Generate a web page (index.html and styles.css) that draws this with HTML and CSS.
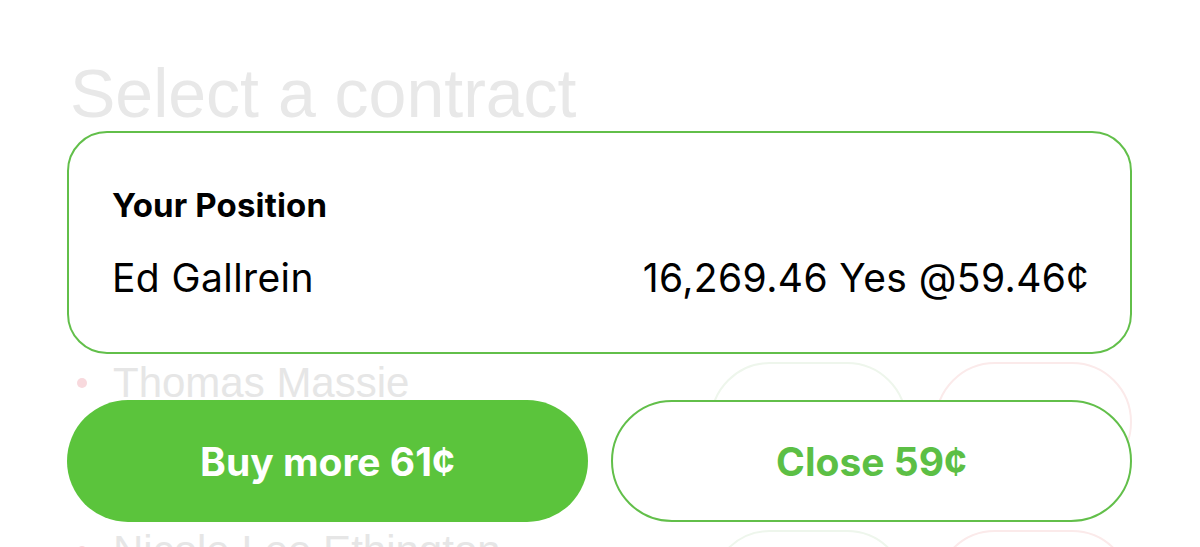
FILE: index.html
```html
<!DOCTYPE html>
<html lang="en">
<head>
    <meta charset="UTF-8">
    <meta name="viewport" content="width=device-width, initial-scale=1.0">
    <title>Select a contract</title>
    <link rel="stylesheet" href="styles.css">
</head>
<body>
    <div class="screen">
        <div class="contracts">
            <h1 class="title">Select a contract</h1>
            <div class="contract-list">
                <div class="contract-row">
                    <div class="contract-name"><span class="dot"></span>Thomas Massie</div>
                    <div class="pill yes"></div>
                    <div class="pill no"></div>
                </div>
                <div class="contract-row">
                    <div class="contract-name"><span class="dot"></span>Nicole Lee Ethington</div>
                    <div class="pill yes"></div>
                    <div class="pill no"></div>
                </div>
            </div>
        </div>

        <div class="position-panel">
            <div class="position-card">
                <div class="position-title">Your Position</div>
                <div class="position-row">
                    <span>Ed Gallrein</span>
                    <span>16,269.46 Yes @59.46¢</span>
                </div>
            </div>
            <div class="panel-buttons">
                <button class="btn btn-buy">Buy more 61¢</button>
                <button class="btn btn-close">Close 59¢</button>
            </div>
        </div>
    </div>
</body>
</html>
```

FILE: styles.css
```css
body {
    margin: 0;
    background-color: #fff;
    font-family: Inter, "Liberation Sans", sans-serif;
}
.screen {
    position: relative;
    width: 1200px;
    height: 547px;
    overflow: hidden;
    background-color: #fff;
}

/* faded list behind the panel */
.contracts {
    padding-top: 59px;
}
.title {
    margin: 0 0 0 70px;
    font: 400 68px/1 "Liberation Sans", Arial, sans-serif;
    color: #e8e8e8;
}
.contract-list {
    margin-top: 235px;
}
.contract-row {
    display: flex;
    align-items: flex-start;
    gap: 28px;
    height: 168px;
    padding: 0 68px 0 77px;
}
.contract-name {
    display: flex;
    align-items: center;
    gap: 26px;
    height: 42px;
    margin-right: auto;
    font: 400 42px/1 "Liberation Sans", Arial, sans-serif;
    color: #e6e6e6;
    white-space: nowrap;
}
.dot {
    width: 10px;
    height: 10px;
    border-radius: 50%;
    background-color: #f8d9dd;
}
.pill {
    width: 197px;
    height: 120px;
    box-sizing: border-box;
    border-radius: 60px;
    border: 2px solid #eef6ec;
}
.pill.no {
    border-color: #fbeaea;
}

/* position panel lying over the list */
.position-panel {
    position: absolute;
    left: 67px;
    top: 131px;
    width: 1065px;
    display: flex;
    flex-direction: column;
    gap: 46px;
}
.position-card {
    box-sizing: border-box;
    height: 223px;
    padding: 56px 41px 0 43px;
    border: 2.5px solid #62bf4a;
    border-radius: 40px;
    background-color: #fff;
    color: #000;
}
.position-title {
    font-size: 33px;
    font-weight: 700;
    line-height: 1;
    letter-spacing: 0.15px;
}
.position-row {
    display: flex;
    justify-content: space-between;
    margin-top: 36px;
    font-size: 39px;
    line-height: 1;
    letter-spacing: 0.4px;
}
.panel-buttons {
    display: grid;
    grid-template-columns: 1fr 1fr;
    gap: 23px;
}
.btn {
    box-sizing: border-box;
    height: 122px;
    border-radius: 61px;
    font-family: Inter, "Liberation Sans", sans-serif;
    font-size: 39px;
    font-weight: 700;
    cursor: pointer;
}
.btn-buy {
    border: none;
    background-color: #5bc43c;
    color: #fff;
}
.btn-close {
    border: 2.5px solid #62bf4a;
    background-color: #fff;
    color: #5cbf45;
}
```
